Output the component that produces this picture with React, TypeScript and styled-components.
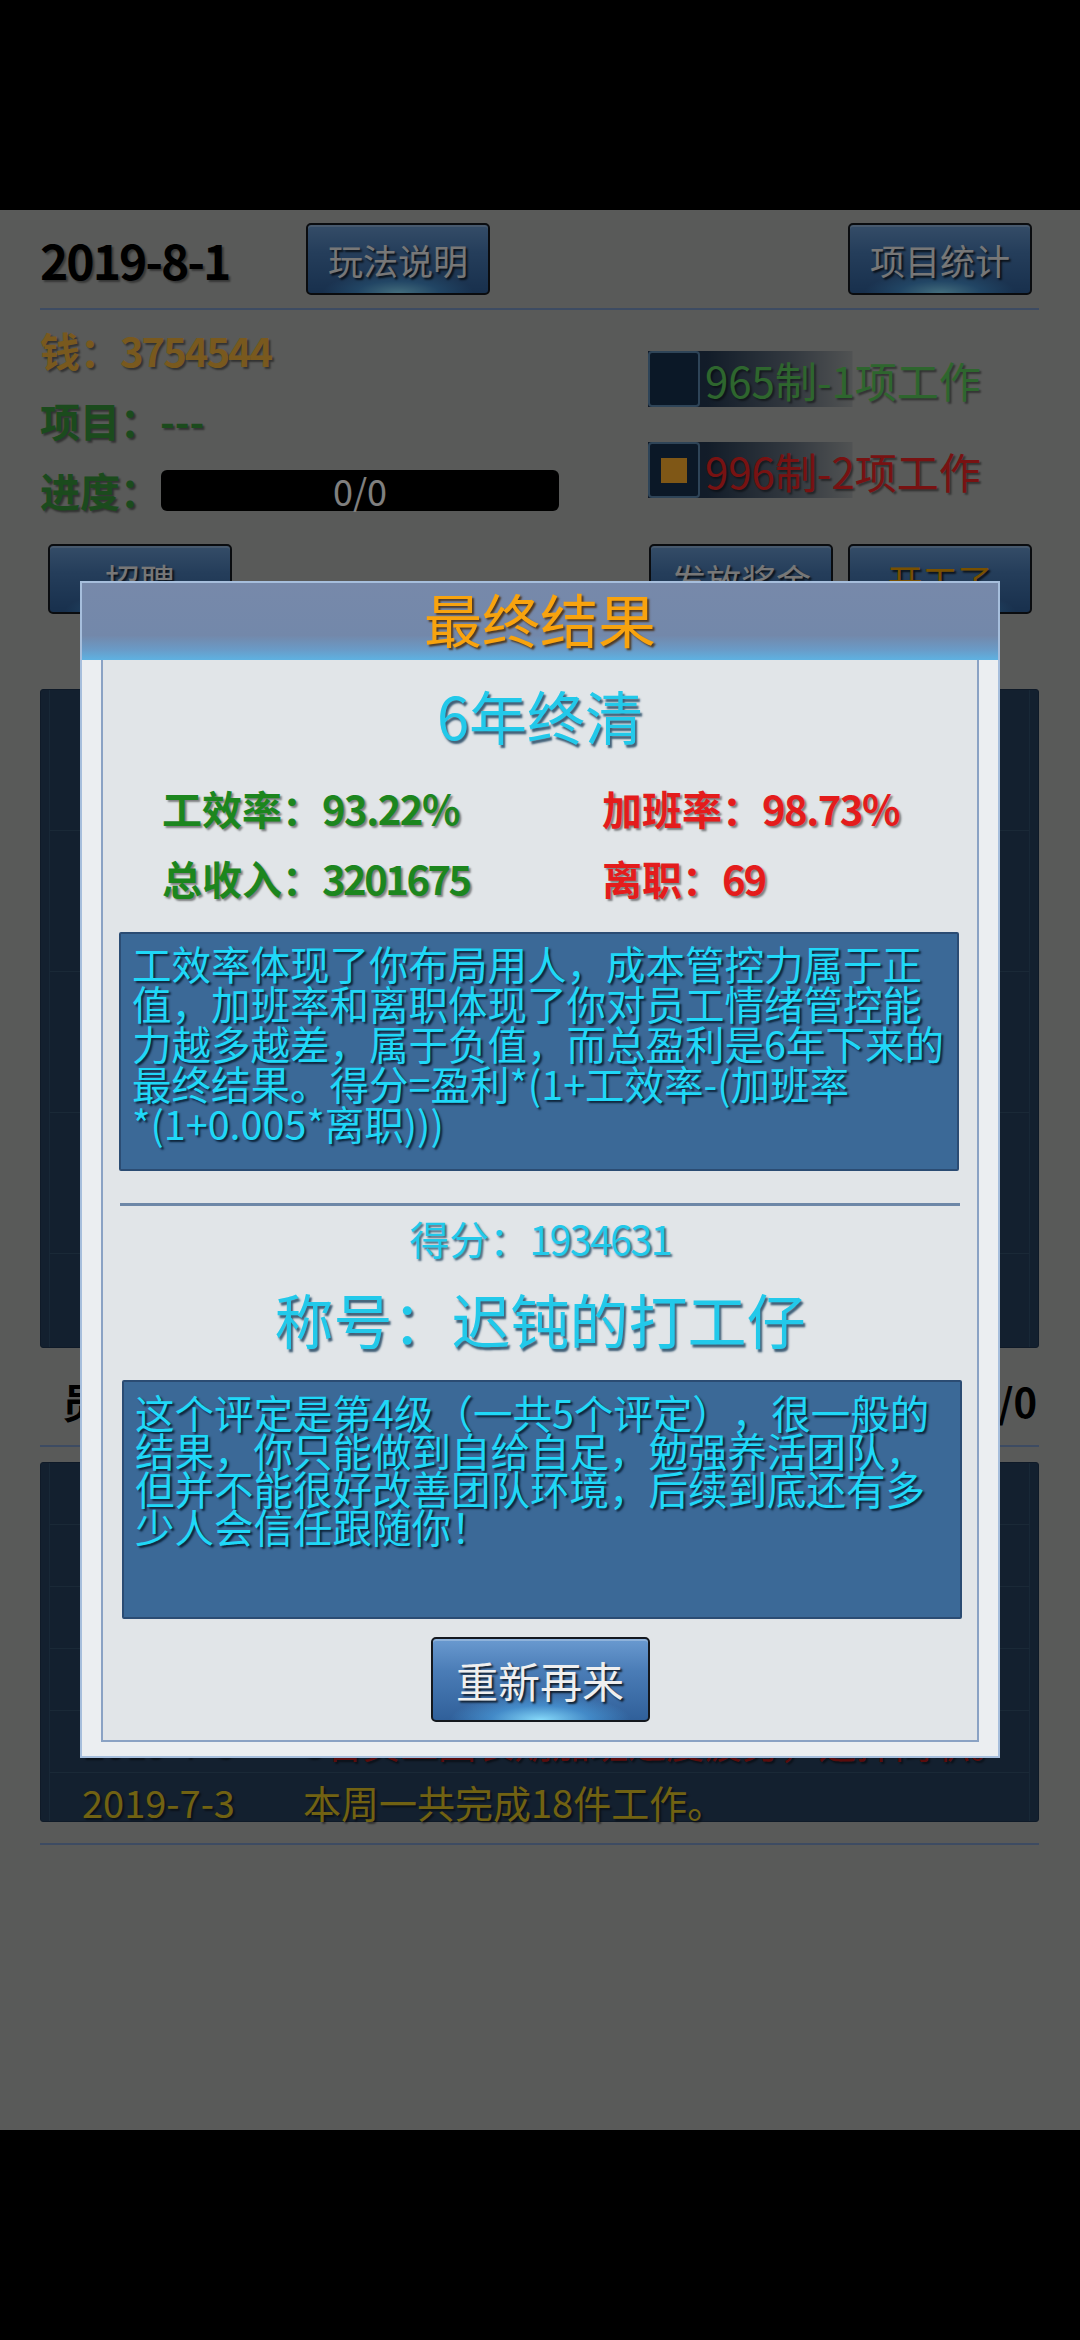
import styled, { createGlobalStyle } from 'styled-components'

const GlobalStyle = createGlobalStyle`
  html, body {
    margin: 0;
    padding: 0;
    background: #000;
  }
  body {
    font-family: "Noto Sans CJK SC", "Noto Sans", sans-serif;
    text-spacing-trim: space-all;
  }
  * {
    box-sizing: border-box;
  }
`;

const Screen = styled.div`
  position: relative;
  width: 1080px;
  height: 2340px;
  display: flex;
  flex-direction: column;
  background: #000;
  overflow: hidden;
`;

const SystemBar = styled.div`
  flex: none;
  height: 210px;
  background: #000;
`;

const Main = styled.main`
  flex: 1;
  display: flex;
  flex-direction: column;
  padding: 0 41px 0 40px;
  background: #b3b5b3;
`;

// narrow digits, the game font packs numbers tighter than Noto does
const Num = styled.span<{ readonly $ls?: number }>`
  letter-spacing: ${p => p.$ls ?? -2}px;
`;

const TopBar = styled.div`
  display: flex;
  align-items: center;
  height: 72px;
  margin-top: 13px;
  padding-right: 7px;
`;

const DateText = styled.div`
  width: 266px;
  font-size: 48px;
  font-weight: 700;
  line-height: 1;
  color: #000;
  text-shadow: 2px 2px 2px rgba(0, 0, 0, 0.4);
`;

type GameButtonProps = {
  readonly $w: number
  readonly $h: number
  readonly $size: number
  readonly $color?: string
}

const GameButton = styled.button<GameButtonProps>`
  flex: none;
  width: ${p => p.$w}px;
  height: ${p => p.$h}px;
  padding: 0;
  border: 2px solid #14181e;
  border-radius: 5px;
  background:
    radial-gradient(ellipse 42% 32% at 50% 100%, rgba(140, 225, 255, 0.95) 0%, rgba(80, 170, 235, 0.55) 55%, rgba(80, 170, 235, 0) 100%),
    linear-gradient(180deg, #6a9ad0 0%, #4a7cb6 40%, #30609a 100%);
  box-shadow: inset 0 2px 0 rgba(255, 255, 255, 0.25);
  color: ${p => p.$color ?? '#efefef'};
  font-family: inherit;
  font-size: ${p => p.$size}px;
  line-height: 1;
  text-shadow: 2px 2px 2px rgba(0, 0, 0, 0.75);
`;

const Spacer = styled.div`
  flex: 1;
`;

const Divider = styled.div<{ readonly $top: number }>`
  flex: none;
  height: 2px;
  margin-top: ${p => p.$top}px;
  background: #7a96c4;
`;

const InfoArea = styled.div`
  display: flex;
  height: 215px;
  padding-top: 5px;
`;

const StatList = styled.div`
  width: 608px;
  display: flex;
  flex-direction: column;
`;

const StatLine = styled.div<{ readonly $color: string }>`
  display: flex;
  align-items: center;
  height: 70px;
  font-size: 40px;
  font-weight: 700;
  color: ${p => p.$color};
  text-shadow: 2px 2px 2px rgba(0, 0, 0, 0.45);
`;

const ProgressBar = styled.div`
  width: 398px;
  height: 41px;
  margin-left: 1px;
  border-radius: 6px;
  background: #000;
  color: #ffffff;
  font-size: 36px;
  font-weight: 400;
  line-height: 41px;
  text-align: center;
  text-shadow: none;
`;

const ModeList = styled.div`
  display: flex;
  flex-direction: column;
  gap: 35px;
  padding-top: 36px;
`;

const ModeItem = styled.div`
  display: flex;
  align-items: center;
  height: 56px;
  background: linear-gradient(90deg, rgba(22, 44, 72, 0.95) 0, rgba(22, 44, 72, 0.9) 60px, rgba(40, 60, 86, 0.55) 145px, rgba(60, 74, 92, 0.15) 204px, transparent 205px);
`;

const ModeBox = styled.div`
  flex: none;
  display: flex;
  align-items: center;
  justify-content: center;
  width: 52px;
  height: 56px;
  border: 2px solid #5c88b0;
  border-radius: 4px;
  background: #17314e;
`;

const ModeTick = styled.div`
  width: 26px;
  height: 25px;
  background: #ffae2c;
`;

const ModeLabel = styled.span<{ readonly $color: string }>`
  margin-left: 5px;
  font-size: 42px;
  color: ${p => p.$color};
  white-space: nowrap;
  text-shadow: 2px 2px 2px rgba(0, 0, 0, 0.45);
`;

const ActionRow = styled.div`
  display: flex;
  gap: 15px;
  height: 70px;
  margin-top: 19px;
  padding: 0 7px 0 8px;
`;

const Panel = styled.div<{ readonly $top: number; readonly $h: number }>`
  flex: none;
  display: flex;
  flex-direction: column;
  height: ${p => p.$h}px;
  margin-top: ${p => p.$top}px;
  padding: 0 8px;
  border: 1px solid #1f3550;
  border-radius: 3px;
  background: #27405e;
`;

const PanelRow = styled.div<{ readonly $h: number; readonly $padTop?: number }>`
  flex: none;
  display: flex;
  align-items: center;
  height: ${p => p.$h}px;
  padding: ${p => p.$padTop ?? 0}px 0 0 32px;
  border-left: 1px solid #30506e;
  border-right: 1px solid #30506e;
  border-bottom: 1px solid #35526f;
  font-size: 38px;
  line-height: 1;
  white-space: nowrap;
  text-shadow: 2px 2px 2px rgba(0, 0, 0, 0.5);

  &:last-child {
    border-bottom: none;
  }
`;

const LogDate = styled.span<{ readonly $color: string }>`
  width: 221px;
  flex: none;
  color: ${p => p.$color};
`;

const LogText = styled.span<{ readonly $color: string }>`
  color: ${p => p.$color};
`;

const StaffHeader = styled.div`
  display: flex;
  align-items: center;
  justify-content: space-between;
  height: 97px;
  padding: 8px 2px 0 22px;
  font-size: 40px;
  font-weight: 700;
  color: #000;
`;

const Dim = styled.div`
  position: absolute;
  inset: 0;
  background: rgba(0, 0, 0, 0.5);
`;

const Dialog = styled.section`
  position: absolute;
  top: 581px;
  left: 80px;
  width: 920px;
  height: 1177px;
  display: flex;
  flex-direction: column;
  border: 2px solid #a6bedc;
  background: #ebeef1;
`;

const DialogHeader = styled.header`
  flex: none;
  height: 77px;
  background: linear-gradient(180deg, #7789aa 0%, #7388aa 68%, #6a9ac6 86%, #5eb2e2 100%);
  color: #f8a30e;
  font-size: 58px;
  line-height: 71px;
  text-align: center;
  text-shadow: 2px 2px 2px rgba(70, 36, 0, 0.8);
`;

const DialogBody = styled.div`
  flex: none;
  display: flex;
  flex-direction: column;
  align-items: center;
  height: 1082px;
  margin: 0 19px;
  padding-bottom: 18px;
  border: 2px solid #8aa2c4;
  border-top: none;
  background: #e1e5e8;
`;

const Headline = styled.div<{ readonly $top: number; readonly $size: number }>`
  margin-top: ${p => p.$top}px;
  font-size: ${p => p.$size}px;
  line-height: 70px;
  color: #22c9ea;
  text-shadow: 2px 3px 2px rgba(10, 50, 80, 0.75);
  white-space: nowrap;
`;

const Score = styled.div`
  margin-top: 7px;
  font-size: 40px;
  line-height: 50px;
  color: #22c9ea;
  text-shadow: 2px 2px 2px rgba(10, 50, 80, 0.7);
`;

const StatsGrid = styled.div`
  align-self: stretch;
  display: grid;
  grid-template-columns: 440px 1fr;
  grid-auto-rows: 70px;
  margin-top: 23px;
  padding-left: 59px;
`;

const Stat = styled.div<{ readonly $color: string }>`
  display: flex;
  align-items: center;
  font-size: 40px;
  font-weight: 700;
  color: ${p => p.$color};
  text-shadow: 2px 2px 2px rgba(0, 0, 0, 0.45);
`;

type InfoBoxProps = {
  readonly $top: number
  readonly $pad: number
  readonly $lh: number
  readonly $shift: number
}

const InfoBox = styled.div<InfoBoxProps>`
  flex: none;
  width: 840px;
  height: 239px;
  margin-top: ${p => p.$top}px;
  margin-left: ${p => p.$shift}px;
  padding: ${p => p.$pad}px 9px 0 11px;
  border: 2px solid #2b4c73;
  border-radius: 2px;
  background: #3b6997;
  color: #1fd8f8;
  font-size: 39.5px;
  line-height: ${p => p.$lh}px;
  text-shadow: 2px 2px 2px rgba(4, 22, 40, 0.85);
`;

const Keep = styled.span`
  white-space: nowrap;
`;

const Rule = styled.div`
  flex: none;
  width: 840px;
  height: 3px;
  margin-top: 32px;
  background: #6d87a7;
`;

const Retry = styled(GameButton)`
  margin-top: 18px;
`;

const staffRows = [141, 141, 141, 141, 93];

const logs = [
  { date: '2019-7-31', text: '本周一共完成20件工作。', color: '#e2c424' },
  { date: '2019-7-24', text: '本周一共完成19件工作。', color: '#e2c424' },
  { date: '2019-7-17', text: '本周一共完成21件工作。', color: '#e2c424' },
  { date: '2019-7-10', text: '本周一共完成17件工作。', color: '#e2c424' },
  { date: '2019-7-5', text: '3名员工因长期加班过度疲劳，选择离职。', color: '#b41818' },
  { date: '2019-7-3', text: '本周一共完成18件工作。', color: '#e2c424' },
];

const App = () => {
  return (
    <>
      <GlobalStyle />
      <Screen>
        <SystemBar />
        <Main>
          <TopBar>
            <DateText><Num>2019-8-1</Num></DateText>
            <GameButton $w={184} $h={72} $size={35}>玩法说明</GameButton>
            <Spacer />
            <GameButton $w={184} $h={72} $size={35}>项目统计</GameButton>
          </TopBar>
          <Divider $top={13} />

          <InfoArea>
            <StatList>
              <StatLine $color='#f2b33c'>钱：<Num>3754544</Num></StatLine>
              <StatLine $color='#36963a'>项目：---</StatLine>
              <StatLine $color='#36963a'>
                进度：<ProgressBar>0/0</ProgressBar>
              </StatLine>
            </StatList>
            <ModeList>
              <ModeItem>
                <ModeBox />
                <ModeLabel $color='#5ccc5c'>965制-1项工作</ModeLabel>
              </ModeItem>
              <ModeItem>
                <ModeBox><ModeTick /></ModeBox>
                <ModeLabel $color='#f02424'>996制-2项工作</ModeLabel>
              </ModeItem>
            </ModeList>
          </InfoArea>

          <ActionRow>
            <GameButton $w={184} $h={70} $size={35}>招聘</GameButton>
            <Spacer />
            <GameButton $w={184} $h={70} $size={35}>发放奖金</GameButton>
            <GameButton $w={184} $h={70} $size={35} $color='#f0a000'>开工了</GameButton>
          </ActionRow>

          <Panel $top={75} $h={659}>
            {staffRows.map((h, i) => (
              <PanelRow key={i} $h={h} />
            ))}
          </Panel>

          <StaffHeader>
            <span>员工：</span>
            <span>人数：0/0</span>
          </StaffHeader>
          <Divider $top={0} />

          <Panel $top={15} $h={360}>
            {logs.map((log, i) => {
              const last = i === logs.length - 1;
              return (
                <PanelRow key={log.date} $h={last ? 48 : 62} $padTop={last ? 10 : 0}>
                  <LogDate $color={log.color}>{log.date}</LogDate>
                  <LogText $color={log.color}>{log.text}</LogText>
                </PanelRow>
              );
            })}
          </Panel>
          <Divider $top={21} />
        </Main>
        <SystemBar />

        <Dim />

        <Dialog>
          <DialogHeader>最终结果</DialogHeader>
          <DialogBody>
            <Headline $top={20} $size={58}>6年终清</Headline>

            <StatsGrid>
              <Stat $color='#1c861e'>工效率：<Num $ls={-1.5}>93.22%</Num></Stat>
              <Stat $color='#e41c1c'>加班率：<Num $ls={-1.5}>98.73%</Num></Stat>
              <Stat $color='#1c861e'>总收入：<Num $ls={-2.5}>3201675</Num></Stat>
              <Stat $color='#e41c1c'>离职：<Num>69</Num></Stat>
            </StatsGrid>

            <InfoBox $top={19} $pad={9} $lh={40} $shift={-2}>
              工效率体现了你布局用人，成本管控力属于正值，加班率和离职体现了你对员工情绪管控能力越多越差，属于负值，而总盈利是6年下来的最终结果。得分=盈利*(1+工效率-(加班率<Keep>*(1+0.005*离职)))</Keep>
            </InfoBox>

            <Rule />
            <Score>得分：<Num>1934631</Num></Score>
            <Headline $top={21} $size={59}>称号：迟钝的打工仔</Headline>

            <InfoBox $top={26} $pad={11} $lh={38} $shift={4}>
              这个评定是第4级（一共5个评定），很一般的结果，你只能做到自给自足，勉强养活团队，但并不能很好改善团队环境，后续到底还有多少人会信任跟随你！
            </InfoBox>

            <Retry $w={219} $h={85} $size={42}>重新再来</Retry>
          </DialogBody>
        </Dialog>
      </Screen>
    </>
  );
}

export default App;
